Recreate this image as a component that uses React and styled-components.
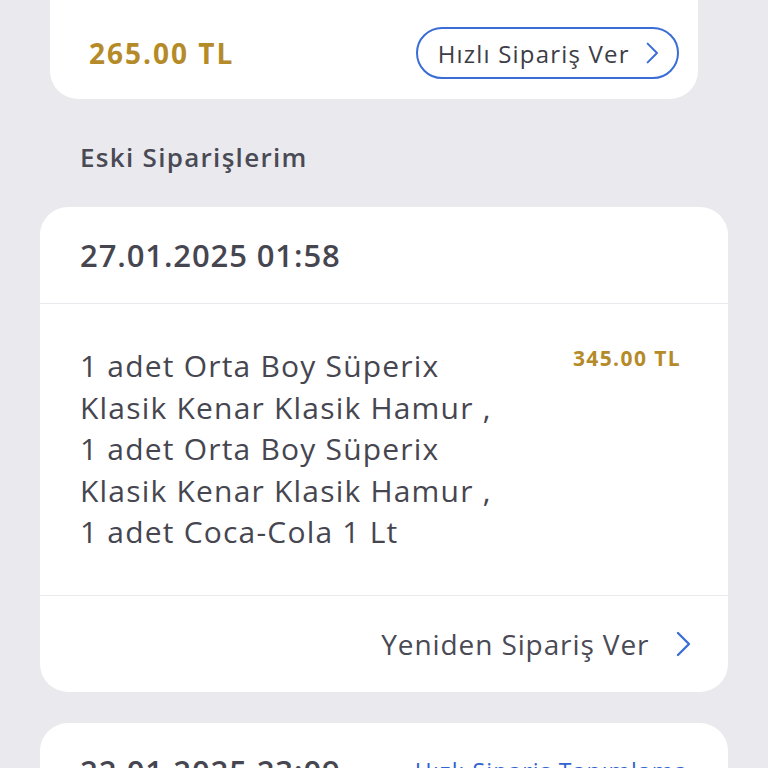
import React from 'react';
import styled, { createGlobalStyle } from 'styled-components';

const Global = createGlobalStyle`
  html, body {
    margin: 0;
    padding: 0;
    background: #e9e9ee;
    font-family: "Open Sans", "Noto Sans", sans-serif;
    color: #464650;
  }
  #root {
    height: 768px;
    overflow: hidden;
  }
`;

const Page = styled.div`
  display: flex;
  flex-direction: column;
  padding: 0 40px;
`;

const QuickCard = styled.div`
  margin: 0 30px 0 10px;
  background: #fff;
  border-radius: 0 0 28px 28px;
  padding: 27px 19px 20px 39px;
  display: flex;
  align-items: center;
  justify-content: space-between;
`;

const Price = styled.span`
  font-weight: 700;
  font-size: ${(p) => p.size || 28}px;
  color: #b58b2a;
  letter-spacing: ${(p) => p.spacing || 2}px;
`;

const OutlineButton = styled.button`
  height: 52px;
  padding: 0 18px 0 20px;
  border: 2px solid #3a6dd6;
  border-radius: 26px;
  background: #fff;
  display: flex;
  align-items: center;
  gap: 16px;
  font-family: inherit;
  font-size: 24px;
  font-weight: 500;
  letter-spacing: 1.2px;
  color: #3d3d47;
`;

const SectionTitle = styled.h2`
  margin: 0;
  padding: 42px 40px 0;
  height: 108px;
  box-sizing: border-box;
  font-size: 26px;
  font-weight: 600;
  letter-spacing: 1.3px;
  color: #4a4a55;
  line-height: 32px;
`;

const OrderCard = styled.div`
  background: #fff;
  border-radius: 28px;
  margin-bottom: 31px;
  overflow: hidden;
`;

const CardHeader = styled.div`
  height: 97px;
  padding: 0 40px;
  display: flex;
  align-items: center;
  justify-content: space-between;
  border-bottom: ${(p) => (p.divider ? '1.5px solid #e8e8ed' : 'none')};
  box-sizing: border-box;
`;

const DateText = styled.span`
  font-size: 31px;
  font-weight: 600;
  letter-spacing: 0.9px;
  color: #464650;
`;

const LinkText = styled.span`
  font-size: 23px;
  letter-spacing: 1.1px;
  color: #2f63d0;
`;

const CardBody = styled.div`
  display: flex;
  justify-content: space-between;
  align-items: flex-start;
  padding: 41px 47px 42px 40px;
  border-bottom: 1.5px solid #e8e8ed;
`;

const Items = styled.div`
  font-size: 30px;
  line-height: 41.5px;
  letter-spacing: 1.2px;
  color: #464650;
`;

const PriceWrap = styled.div`
  padding-top: 1px;
  line-height: 24px;
`;

const CardFooter = styled.div`
  height: 96px;
  padding: 0 36px 0 40px;
  display: flex;
  align-items: center;
  justify-content: flex-end;
  gap: 27px;
  font-size: 28px;
  letter-spacing: 0.9px;
  color: #4a4a55;
`;

const Chevron = ({ size = 20 }) => (
  <svg width={size * 0.6} height={size} viewBox="0 0 12 20" fill="none">
    <path d="M1.5 1.5 L10 10 L1.5 18.5" stroke="#3a6dd6" strokeWidth="1.8" strokeLinecap="round" strokeLinejoin="round" />
  </svg>
);

const lines = [
  '1 adet Orta Boy Süperix',
  'Klasik Kenar Klasik Hamur ,',
  '1 adet Orta Boy Süperix',
  'Klasik Kenar Klasik Hamur ,',
  '1 adet Coca-Cola 1 Lt',
];

export default function App() {
  return (
    <Page>
      <Global />
      <QuickCard>
        <Price>265.00 TL</Price>
        <OutlineButton>
          Hızlı Sipariş Ver
          <Chevron size={22} />
        </OutlineButton>
      </QuickCard>
      <SectionTitle>Eski Siparişlerim</SectionTitle>
      <OrderCard>
        <CardHeader divider>
          <DateText>27.01.2025 01:58</DateText>
        </CardHeader>
        <CardBody>
          <Items>
            {lines.map((l, i) => (
              <div key={i}>{l}</div>
            ))}
          </Items>
          <PriceWrap>
            <Price size={21} spacing={1.4}>345.00 TL</Price>
          </PriceWrap>
        </CardBody>
        <CardFooter>
          Yeniden Sipariş Ver
          <Chevron size={26} />
        </CardFooter>
      </OrderCard>
      <OrderCard>
        <CardHeader>
          <DateText>22.01.2025 23:09</DateText>
          <LinkText>Hızlı Sipariş Tanımlama</LinkText>
        </CardHeader>
      </OrderCard>
    </Page>
  );
}
